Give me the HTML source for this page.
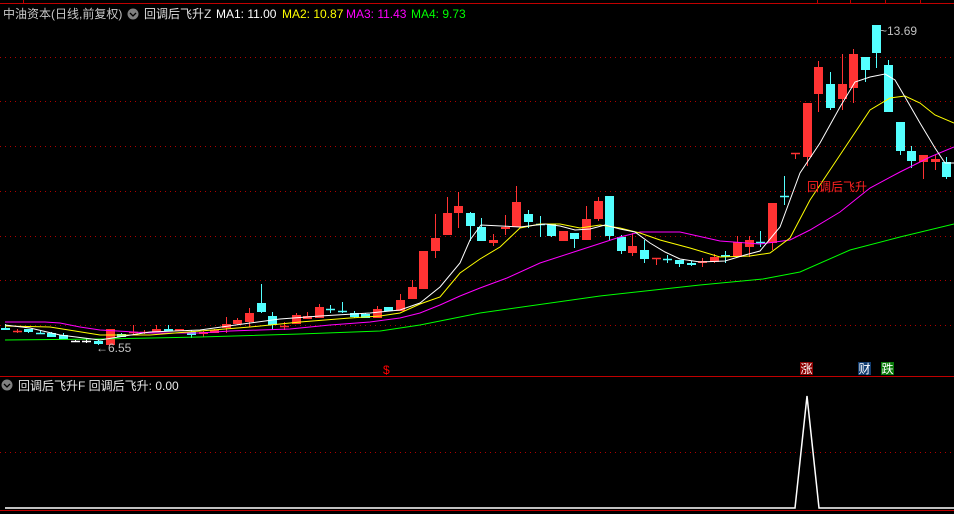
<!DOCTYPE html>
<html><head><meta charset="utf-8"><style>
html,body{margin:0;padding:0;background:#000;width:954px;height:514px;overflow:hidden}
svg{display:block}
text{font-family:"Liberation Sans","Noto Sans CJK SC",sans-serif;font-size:12px}
</style></head><body>
<svg id="s" width="954" height="514" viewBox="0 0 954 514" xmlns="http://www.w3.org/2000/svg">
<rect width="954" height="514" fill="#000"/>
<line x1="0" y1="3.5" x2="954" y2="3.5" stroke="#c00000" stroke-width="1"/>
<line x1="23.5" y1="0" x2="23.5" y2="3" stroke="#c00000"/>
<line x1="817.5" y1="0" x2="817.5" y2="3" stroke="#c00000"/>
<line x1="850.5" y1="0" x2="850.5" y2="3" stroke="#c00000"/>
<line x1="885.5" y1="0" x2="885.5" y2="3" stroke="#c00000"/>
<line x1="920.5" y1="0" x2="920.5" y2="3" stroke="#c00000"/>
<g stroke="#b00000" stroke-dasharray="1,4" stroke-width="1">
<line x1="0" y1="57.5" x2="954" y2="57.5"/><line x1="0" y1="101.5" x2="954" y2="101.5"/>
<line x1="0" y1="146.5" x2="954" y2="146.5"/><line x1="0" y1="191.5" x2="954" y2="191.5"/>
<line x1="0" y1="236.5" x2="954" y2="236.5"/><line x1="0" y1="280.5" x2="954" y2="280.5"/>
<line x1="0" y1="325.5" x2="954" y2="325.5"/><line x1="0" y1="452.5" x2="954" y2="452.5"/>
</g>
<line x1="0" y1="376.5" x2="954" y2="376.5" stroke="#c00000"/>
<line x1="0" y1="510.5" x2="954" y2="510.5" stroke="#c00000"/>
<g id="candles"></g>
<g id="ma" fill="none" stroke-width="1"></g>
<text x="3" y="18" fill="#c8c8c8">中油资本(日线,前复权)</text>
<circle cx="133" cy="14" r="5.5" fill="#808080"/><path d="M130,13 L133,16 L136,13" stroke="#000" stroke-width="1.3" fill="none"/>
<text x="144" y="18" fill="#e0e0e0">回调后飞升Z</text>
<text x="216" y="18" fill="#fff">MA1: 11.00</text>
<text x="282" y="18" fill="#ffff00">MA2: 10.87</text>
<text x="346" y="18" fill="#ff00ff">MA3: 11.43</text>
<text x="411" y="18" fill="#00ff00">MA4: 9.73</text>
<text x="96" y="352" fill="#c0c0c0">←6.55</text>
<text x="880" y="35" fill="#c0c0c0">~13.69</text>
<text x="807" y="191" fill="#ff2020">回调后飞升</text>
<text x="383" y="374" fill="#ff0000" font-size="11">$</text>
<rect x="800" y="362" width="13" height="13" fill="#8b0000"/><text x="800.5" y="373" fill="#fff" font-size="12">涨</text>
<rect x="858" y="362" width="13" height="13" fill="#123d70"/><text x="858.5" y="373" fill="#fff" font-size="12">财</text>
<rect x="881" y="362" width="13" height="13" fill="#0a7a0a"/><text x="881.5" y="373" fill="#fff" font-size="12">跌</text>
<circle cx="7" cy="385" r="5.5" fill="#808080"/><path d="M4,384 L7,387 L10,384" stroke="#000" stroke-width="1.3" fill="none"/>
<text x="18" y="390" fill="#e8e8e8">回调后飞升F  回调后飞升: 0.00</text>
<polyline points="5,508 795,508 807,396 819,508 954,508" fill="none" stroke="#fff" stroke-width="1.5"/>
</svg>
<script>
var D=[
['c',328,330,324,330],['r',331,331,329,333],['c',329,332,329,333],['c',333,333,331,334],['c',333,337,332,337],
['c',335,339,333,339],['w',341,341,340,342],['w',341,341,338,343],['c',341,344,340,345],['r',329,345,329,345],
['c',334,337,333,337],['r',332,332,325,335],['r',332,332,330,334],['r',329,332,325,332],['c',329,331,325,331],
['r',329,331,329,331],['c',332,335,330,338],['r',332,334,331,337],['r',330,333,329,333],['r',324,328,317,333],
['r',320,324,318,325],['r',313,322,308,327],['c',303,312,284,313],['c',316,325,312,330],['r',326,326,322,330],
['r',315,324,313,324],['r',316,319,312,319],['r',307,318,304,318],['c',309,309,305,313],['c',311,311,302,313],
['c',313,317,311,318],['c',314,318,313,318],['r',309,318,306,318],['c',307,311,307,311],['r',300,311,294,311],
['r',287,299,280,299],['r',251,289,251,289],['r',238,251,214,258],['r',213,235,197,235],['r',206,213,192,228],
['c',213,226,212,241],['c',227,241,218,241],['r',240,243,234,246],['r',227,229,215,235],['r',202,227,186,227],
['c',214,222,210,228],['c',224,224,216,237],['c',224,236,224,237],['r',231,241,231,241],['c',233,239,233,248],
['r',219,240,206,240],['r',201,219,197,221],['c',196,236,196,240],['c',237,251,235,254],['r',246,253,233,256],
['c',250,259,240,263],['r',258,258,258,265],['c',259,259,255,263],['c',260,264,260,267],['c',263,265,261,266],
['r',261,263,258,267],['r',257,262,254,263],['c',255,257,251,263],['r',242,257,236,257],['r',240,247,236,257],
['c',242,242,231,247],['r',203,243,203,250],['c',196,196,176,205],['r',153,153,153,159],['r',103,157,103,166],
['r',67,94,61,112],['c',84,108,72,110],['r',84,99,54,110],['r',54,88,49,103],['c',57,70,57,82],
['c',25,53,25,68],['c',65,112,60,112],['c',122,151,122,155],['c',151,161,146,168],['r',155,162,155,179],
['r',159,162,155,170],['c',162,177,157,179]];
var g='';
for(var i=0;i<D.length;i++){var d=D[i],x=Math.round(5+i*11.62),col=d[0]=='r'?'#ff3333':(d[0]=='c'?'#54ffff':'#ffffff');
g+='<line x1="'+(x+.5)+'" y1="'+d[3]+'" x2="'+(x+.5)+'" y2="'+d[4]+'" stroke="'+col+'"/>';
var h=d[2]-d[1];if(h<1){g+='<line x1="'+(x-4)+'" y1="'+(d[1]+.5)+'" x2="'+(x+5)+'" y2="'+(d[1]+.5)+'" stroke="'+col+'" stroke-width="1.5"/>';}
else g+='<rect x="'+(x-4)+'" y="'+d[1]+'" width="9" height="'+h+'" fill="'+col+'"/>';}
document.getElementById('candles').innerHTML=g;
var M=[
['#00ff00','5,340 100,339 200,337 300,334 380,331 420,325 480,313 600,296 700,285 763,279 800,272 850,250 900,237 954,224'],
['#ff00ff','5,322 45,322 60,323 80,327 100,330 150,333 200,333 230,331 260,330 290,329 330,325 370,322 400,318 420,313 440,305 460,296 480,288 507,278 540,263 580,250 620,237 640,232 680,232 720,241 760,244 790,240 810,230 840,212 870,188 900,172 930,157 954,147'],
['#ffff00','5,326 50,327 100,335 150,335 200,331 250,327 300,322 350,318 380,316 400,313 420,304 440,297 460,273 480,259 500,247 520,228 540,224 560,224 580,228 600,225 620,228 640,233 660,240 690,248 720,257 750,256 770,253 790,238 810,200 830,170 850,140 870,110 890,98 905,96 920,103 935,115 954,123'],
['#ffffff','5,325 30,328 60,335 100,340 150,332 200,330 250,323 280,319 320,316 370,313 400,310 420,303 440,287 460,263 470,240 481,225 520,227 545,224 560,226 575,230 590,229 605,225 620,229 635,232 650,243 665,252 680,259 700,262 725,261 745,255 760,251 780,227 800,173 820,143 840,107 855,82 870,77 885,74 895,80 905,97 920,123 935,148 945,163 954,163']];
var h2='';M.forEach(function(m){h2+='<polyline points="'+m[1]+'" stroke="'+m[0]+'"/>';});
document.getElementById('ma').innerHTML=h2;
</script>
</body></html>
